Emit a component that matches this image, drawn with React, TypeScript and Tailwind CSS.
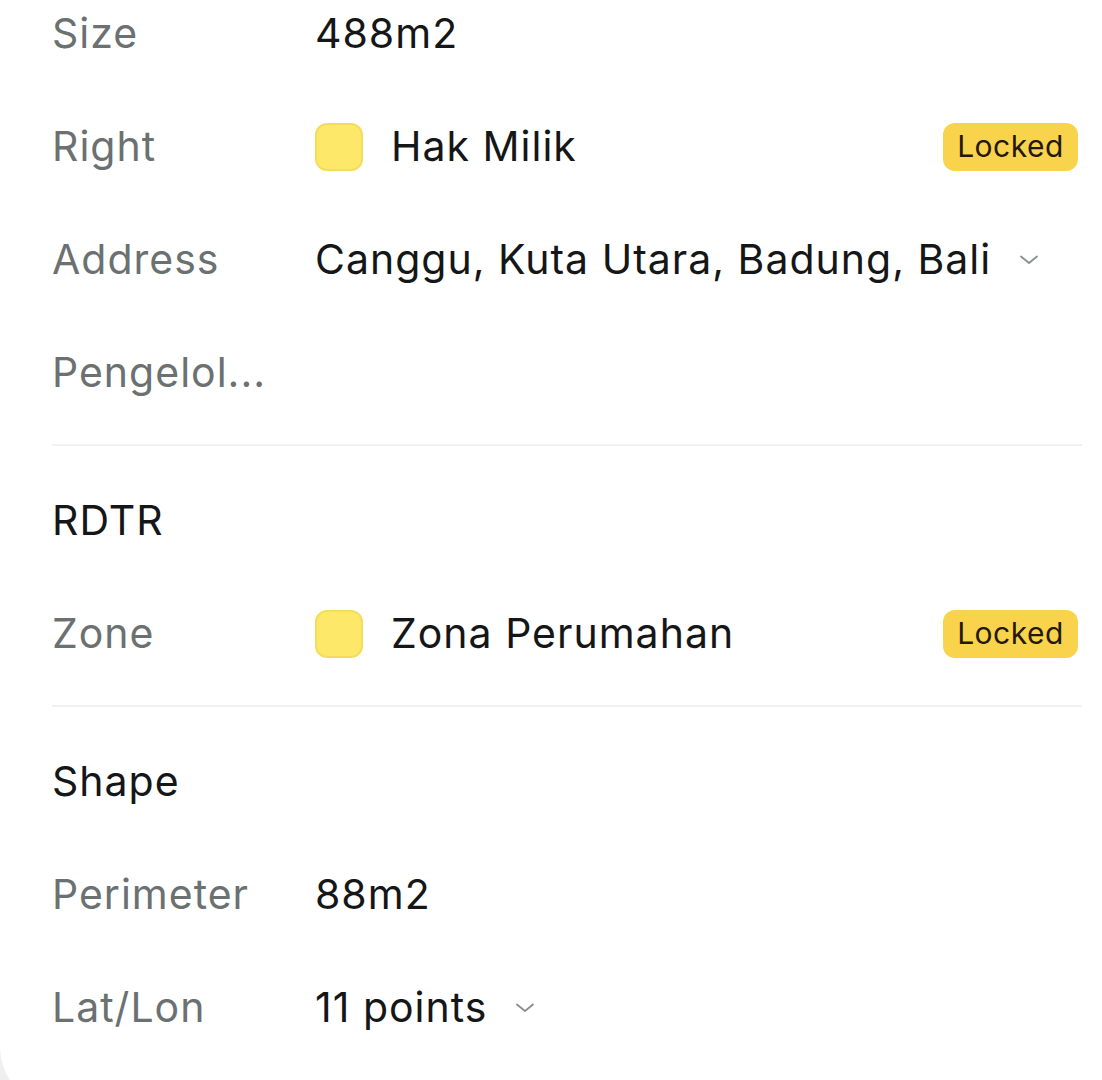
import React from 'react';

type Row = {
  label: string;
  value?: string;
  swatch?: boolean;
  locked?: boolean;
  dropdown?: boolean;
};

const sections: { title?: string; rows: Row[] }[] = [
  {
    rows: [
      { label: 'Size', value: '488m2' },
      { label: 'Right', value: 'Hak Milik', swatch: true, locked: true },
      { label: 'Address', value: 'Canggu, Kuta Utara, Badung, Bali', dropdown: true },
      { label: 'Pengelol...' },
    ],
  },
  {
    title: 'RDTR',
    rows: [{ label: 'Zone', value: 'Zona Perumahan', swatch: true, locked: true }],
  },
  {
    title: 'Shape',
    rows: [
      { label: 'Perimeter', value: '88m2' },
      { label: 'Lat/Lon', value: '11 points', dropdown: true },
    ],
  },
];

const Chevron = () => (
  <svg width="24" height="24" viewBox="0 0 24 24" fill="none" className="ml-[26px] shrink-0">
    <path d="M4 8.5l8 6.5 8-6.5" stroke="#8b8e90" strokeWidth="1.8" strokeLinecap="round" strokeLinejoin="round" />
  </svg>
);

const DetailRow = ({ row }: { row: Row }) => (
  <div className="flex h-[113px] items-center">
    <span className="w-[263px] shrink-0 text-[#6b7071]">{row.label}</span>
    {row.swatch && (
      <span className="mr-[28px] h-[48px] w-[48px] shrink-0 rounded-[12px] border-2 border-[#f5dc5c] bg-[#fde869]" />
    )}
    {row.value && <span className="text-[#151617]">{row.value}</span>}
    {row.dropdown && <Chevron />}
    {row.locked && (
      <span className="ml-auto mr-[4px] flex h-[48px] w-[135px] items-center justify-center rounded-[12px] bg-[#fad34c] text-[30px] tracking-[0.5px] text-[#24180b]">
        Locked
      </span>
    )}
  </div>
);

export default function App() {
  return (
    <div className="h-[1080px] overflow-hidden bg-[#efefef]">
      <div
        className="flex h-[1110px] flex-col rounded-bl-[64px] bg-white pl-[52px] pr-[20px] text-[41px] tracking-[1px]"
        style={{ fontFamily: 'Inter, "Noto Sans", sans-serif' }}
      >
        <div className="-mt-[23px]">
          {sections.map((section, i) => (
            <div key={i}>
              {i > 0 && <div className="mb-[18px] mt-[15px] h-[2px] bg-[#f1f1f1]" />}
              {section.title && (
                <div className="flex h-[113px] items-center text-[#151617]">{section.title}</div>
              )}
              {section.rows.map((row) => (
                <DetailRow key={row.label} row={row} />
              ))}
            </div>
          ))}
        </div>
      </div>
    </div>
  );
}
